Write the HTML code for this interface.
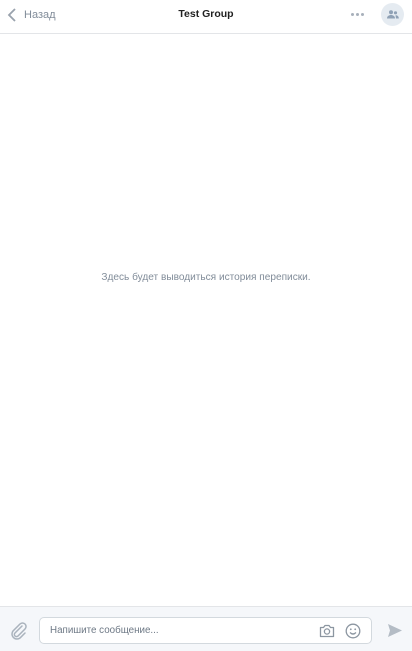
<!DOCTYPE html>
<html><head><meta charset="utf-8"><style>
body{margin:0;width:412px;height:650px;background:#fff;font-family:"Liberation Sans",sans-serif;position:relative;overflow:hidden}
.hdr{position:absolute;top:0;left:0;width:412px;height:33px;border-bottom:1px solid #e3e5e8;background:#fff}
.back{position:absolute;left:24px;top:9px;font-size:11px;color:#818c99}
.title{position:absolute;left:0;width:412px;text-align:center;top:8px;font-size:10.5px;font-weight:bold;color:#222}
.dots{position:absolute;left:351px;top:13px;display:flex;gap:2px}
.dots i{display:block;width:3px;height:3px;border-radius:50%;background:#a8b0bb}
.av{position:absolute;left:381px;top:3px;width:23px;height:23px;border-radius:50%;background:#e5ebf1}
.empty{position:absolute;top:272px;width:412px;text-align:center;font-size:10.1px;color:#818c99}
.bot{position:absolute;top:606px;left:0;width:412px;height:44px;background:#f5f7fa;border-top:1px solid #e3e5e8}
.inp{position:absolute;left:39px;top:10px;width:333px;height:27px;background:#fff;border:1px solid #d3d9de;border-radius:5px;box-sizing:border-box}
.ph{position:absolute;left:10px;top:7px;font-size:9.8px;color:#6d7885}
</style></head><body>
<div class="hdr">
<svg style="position:absolute;left:7px;top:8px" width="10" height="14" viewBox="0 0 10 14"><path d="M8 1L2 7l6 6" fill="none" stroke="#99a2ad" stroke-width="1.8"/></svg>
<div class="back">Назад</div>
<div class="title">Test Group</div>
<div class="dots"><i></i><i></i><i></i></div>
<div class="av"><svg style="position:absolute;left:6px;top:7px" width="12" height="9" viewBox="0 0 12 9"><circle cx="4" cy="2.3" r="2" fill="#8fa1b5"/><path d="M0 8.5c0-2.5 2-3.5 4-3.5s4 1 4 3.5z" fill="#8fa1b5"/><circle cx="8.5" cy="2.8" r="1.6" fill="#8fa1b5"/><path d="M8.5 5.2c1.8 0 3.3.8 3.3 3.3H9z" fill="#8fa1b5"/></svg></div>
</div>
<div class="empty">Здесь будет выводиться история переписки.</div>
<div class="bot">
<svg style="position:absolute;left:10px;top:15px" width="18" height="18" viewBox="0 0 18 18"><path d="M12 4L5 11a2 2 0 0 0 3 3l7-7a3.5 3.5 0 0 0-5-5L3 9a5 5 0 0 0 7 7l5-5" fill="none" stroke="#aab3bd" stroke-width="1.5" stroke-linecap="round"/></svg>
<div class="inp"><div class="ph">Напишите сообщение...</div>
<svg style="position:absolute;left:279px;top:5px" width="16" height="15" viewBox="0 0 16 15"><path d="M1.5 4.5h3l1.5-2h4l1.5 2h3v9h-13z" fill="none" stroke="#8c96a1" stroke-width="1.3" stroke-linejoin="round"/><circle cx="8" cy="8.5" r="2.6" fill="none" stroke="#8c96a1" stroke-width="1.3"/></svg>
<svg style="position:absolute;left:305px;top:5px" width="16" height="16" viewBox="0 0 16 16"><circle cx="8" cy="8" r="6.8" fill="none" stroke="#8c96a1" stroke-width="1.3"/><circle cx="5.8" cy="6.3" r=".9" fill="#8c96a1"/><circle cx="10.2" cy="6.3" r=".9" fill="#8c96a1"/><path d="M5 9.5q3 3 6 0" fill="none" stroke="#8c96a1" stroke-width="1.3"/></svg>
</div>
<svg style="position:absolute;left:387px;top:16px" width="16" height="15" viewBox="0 0 16 15"><path d="M1 1l14 6.5L1 14l2-6.5z" fill="#b4bcc5"/></svg>
</div>
</body></html>
